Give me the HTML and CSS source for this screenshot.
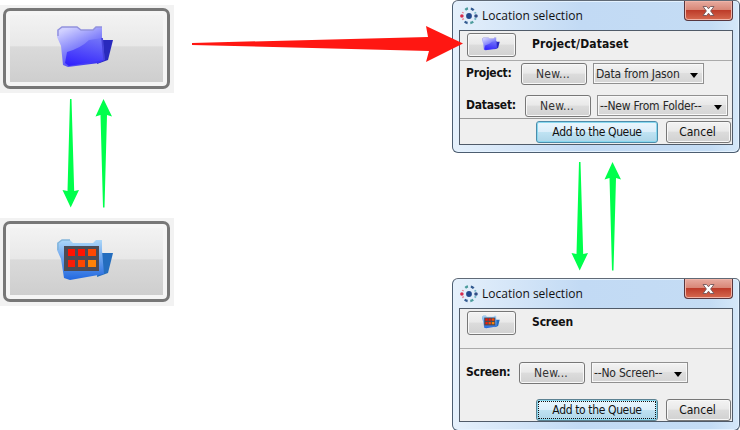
FILE: index.html
```html
<!DOCTYPE html>
<html lang="en">
<head>
<meta charset="utf-8">
<title>Location selection</title>
<link rel="stylesheet" href="styles.css">
</head>
<body>
<svg class="defs" width="0" height="0" aria-hidden="true">
  <defs>
    <linearGradient id="purple" x1="0.1" y1="0.1" x2="0.6" y2="1"><stop offset="0" stop-color="#d0d0ff"/><stop offset=".45" stop-color="#8787fb"/><stop offset="1" stop-color="#3d35f2"/></linearGradient>
    <linearGradient id="deep" x1="0.1" y1="1" x2=".8" y2="0"><stop offset="0" stop-color="#2612ff"/><stop offset="1" stop-color="#6e70f8"/></linearGradient>
    <linearGradient id="blue" x1="0" y1="0" x2="0" y2="1"><stop offset="0" stop-color="#acd7f8"/><stop offset="1" stop-color="#2167df"/></linearGradient>
    <symbol id="folder" viewBox="0 0 57 42">
      <path d="M43 14H56L51 34L40 38Z" fill="#2929bd"/>
      <path d="M0 4L5 1H20L24 4H36L39 1H45V11L48 34L42 37L11 41L6 39L4 20L0 11Z" fill="url(#purple)"/>
      <path d="M10 26Q24 22 32 14L46 12L47 34L12 40L8 37Z" fill="url(#deep)" opacity=".8"/>
      <path d="M1 10V4L5 1H20L24 4H36L39 1H45" fill="none" stroke="#9292dd" stroke-width="1.5"/>
      <path d="M45 12L47 34" fill="none" stroke="#4742d8" stroke-width="1.5"/>
    </symbol>
    <symbol id="plate" viewBox="0 0 57 42">
      <path d="M42 14H56L51 34L40 38Z" fill="#246dbe"/>
      <path d="M0 4L5 1H13L16 4H36L39 1H45V11L47 35L13 41L7 39L4 20L0 11Z" fill="url(#blue)"/>
      <path d="M1 11V4L5 1H13" fill="none" stroke="#84b5da" stroke-width="1.5"/>
      <path d="M7 7H42V32H7Z" fill="#4b4b55"/>
      <path d="M11 10H18V17H11ZM21 10H28V17H21Z" fill="#ff1200"/><path d="M31 10H39V17H31ZM21 21H28V28H21Z" fill="#ff4700"/><path d="M11 21H18V28H11Z" fill="#f91d08"/><path d="M31 21H39V28H31Z" fill="#ff8206"/>
    </symbol>
    <symbol id="logo" viewBox="0 0 18 18">
      <circle cx="9" cy="9" r="2.9" fill="#20488c"/>
      <path d="M5.3 2.8Q6.6 1.7 8 1.4M10.3 16Q12 15.7 13.2 14.7" stroke="#4c9c9c" stroke-width="2.3" fill="none"/>
      <path d="M10.8 1.7Q12.7 2 13.6 3.3M4.7 14.5Q6 15.7 7.6 16" stroke="#335b91" stroke-width="2.3" fill="none"/>
      <path d="M3.1 5.2L2.7 6.2M2.7 11.5L3.4 12.8" stroke="#e58a9a" stroke-width="2"/><circle cx="1.9" cy="9" r="1.8" fill="#d72b4d"/>
      <path d="M15 5.2L15.6 6.6M15.7 11L14.9 12.7" stroke="#79b9c9" stroke-width="2"/><circle cx="16" cy="9" r="1.8" fill="#314e87"/>
    </symbol>
    <symbol id="arrows" viewBox="0 0 50 110">
      <path d="M8 0H9.5L12.2 92L17 91L8.7 108.5L.5 91L5.5 92Z" fill="#00ff4c"/>
      <path d="M41.5 0L50 17.5L45 16L42.5 108.5H41L38.5 16L33.5 17.5Z" fill="#00ff4c"/>
    </symbol>
    <symbol id="cross" viewBox="0 0 13 12">
      <path d="M1 1.5H4.6L6.5 3.8L8.4 1.5H12L8.6 6L12 10.5H8.4L6.5 8.2L4.6 10.5H1L4.4 6Z" fill="#fff" stroke="#74575a" stroke-width=".9"/>
    </symbol>
  </defs>
</svg>
<main class="canvas">
  <section class="samples">
    <div class="sample"><div class="big-button"><svg><use href="#folder"/></svg></div></div>
    <svg class="swap"><use href="#arrows"/></svg>
    <div class="sample"><div class="big-button"><svg><use href="#plate"/></svg></div></div>
  </section>
  <section class="dialogs">
    <div class="dialog">
      <div class="titlebar"><svg class="logo"><use href="#logo"/></svg><span class="title">Location selection</span>
        <div class="close"><svg><use href="#cross"/></svg></div></div>
      <div class="content">
        <div class="head"><div class="button icon-button"><svg><use href="#folder"/></svg></div><b class="heading-project">Project/Dataset</b></div>
        <div class="row project"><b>Project:</b><div class="button new">New...</div><div class="combo jason"><span>Data from Jason</span><i></i></div></div>
        <div class="row dataset"><b>Dataset:</b><div class="button new">New...</div><div class="combo from-folder"><span>--New From Folder--</span><i></i></div></div>
        <div class="footer"><div class="button primary">Add to the Queue</div><div class="button cancel">Cancel</div></div>
      </div>
    </div>
    <svg class="swap"><use href="#arrows"/></svg>
    <div class="dialog screen-dialog">
      <div class="titlebar"><svg class="logo"><use href="#logo"/></svg><span class="title">Location selection</span>
        <div class="close"><svg><use href="#cross"/></svg></div></div>
      <div class="content">
        <div class="head"><div class="button icon-button"><svg><use href="#plate"/></svg></div><b>Screen</b></div>
        <div class="row screen"><b>Screen:</b><div class="button new">New...</div><div class="combo no-screen"><span>--No Screen--</span><i></i></div></div>
        <div class="footer"><div class="button primary focused">Add to the Queue</div><div class="button cancel">Cancel</div></div>
      </div>
    </div>
  </section>
  <svg class="red-arrow" viewBox="0 0 272 38"><path d="M0 17L236 11L234 0L271 17.5L234 36L237 25L0 19Z" fill="#ff1712"/></svg>
</main>
</body>
</html>
```
FILE: styles.css
```css
* { box-sizing: border-box; }
body { margin: 0; background: #fff; color: #111; font: 12px/14px "DejaVu Sans Condensed", "DejaVu Sans", sans-serif; font-stretch: condensed; overflow: hidden; }
.defs { position: absolute; }
svg { display: block; flex: none; }
.canvas { position: relative; width: 740px; height: 430px; display: flex; justify-content: space-between; overflow: hidden; }
.samples { width: 174px; padding-top: 5px; }
.sample { height: 88px; padding: 3px 3px 4px; background: #f2f2f2; }
.big-button { height: 81px; width: 167px; border: 3px solid #777; border-radius: 7px; display: flex; align-items: center; padding-left: 51px; background: linear-gradient(#f4f4f4, #e8e8e8 46%, #dadada 48%, #cdcdcd); box-shadow: inset 0 0 0 4px #f5f5f5; }
.big-button svg { width: 57px; height: 42px; margin-bottom: 3px; }
.swap { width: 50px; height: 110px; margin-left: 62px; }
.samples .swap { margin-top: 6px; margin-bottom: 9px; }
.dialogs { width: 288px; }
.dialog { width: 288px; height: 153px; padding: 0 7px; border: 1px solid #4c5d70; border-top-color: #606a76; border-radius: 6px 5px 6px 6px; background: linear-gradient(90deg, #e5f0fb, #c2daf4 45%, #c4dcf4 90%, #d5e8f9); box-shadow: inset 0 0 0 1px #e4f2ff; }
.dialogs .swap { margin: 9px 0 6px 119px; }
.titlebar { height: 29px; display: flex; align-items: flex-start; }
.logo { width: 18px; height: 18px; margin-top: 6px; }
.title { margin: 7px 0 0 4px; font: 12px/16px "Open Sans", "Noto Sans", sans-serif; white-space: nowrap; }
.close { width: 49px; height: 20px; margin: 0 -1px 0 auto; border: 1px solid #58363e; border-top: 0; border-radius: 0 0 4px 4px; display: flex; justify-content: center; align-items: center; background: linear-gradient(#e7aba0, #d98878 45%, #bd3c2a 50%, #d66a50); box-shadow: inset 0 0 0 1px #f0b4a8; }
.close svg { width: 13px; height: 12px; }
.content { width: 274px; height: 115px; margin-left: -1px; border: 1px solid #505b69; background: #efefef; }
.head { height: 30px; padding: 2px 0 0 7px; display: flex; border-bottom: 1px solid #aaa; }
b { letter-spacing: -.25px; white-space: nowrap; }
.head b { margin: 4px 0 0 16px; letter-spacing: -.15px; }
.head .heading-project { letter-spacing: .12px; }
.button { height: 22px; border: 1px solid #777; border-radius: 3px; background: linear-gradient(#f3f3f3, #e9e9e9 46%, #dcdcdc 50%, #d1d1d1); box-shadow: inset 0 0 0 1px #f8f8f8; display: flex; justify-content: center; align-items: center; white-space: nowrap; }
.icon-button { width: 49px; height: 24px; }
.icon-button svg { width: 18px; height: 14px; margin: 0 1px 3px 0; }
.row { display: flex; align-items: flex-start; padding-left: 6px; }
.row b { padding-top: 3px; }
.project { height: 32px; padding-top: 2px; }
.project b { width: 55px; }
.dataset { height: 25px; padding-top: 2px; }
.dataset b { width: 59px; }
.new { width: 66px; padding-right: 2px; color: #333; letter-spacing: .2px; }
.combo { height: 21px; margin-left: 6px; padding: 0 5px 0 2px; border: 1px solid #909090; display: flex; align-items: center; justify-content: space-between; background: linear-gradient(#f3f3f3, #e8e8e8 46%, #dedede 50%, #d5d5d5); box-shadow: inset 0 0 0 1px #f8f8f8; color: #282828; white-space: nowrap; letter-spacing: -.2px; }
.combo i { border: 4px solid transparent; border-top: 5px solid #000; border-bottom: 0; margin-top: 3px; }
.jason { width: 111px; }
.from-folder { width: 131px; }
.no-screen { width: 97px; }
.footer { border-top: 1px solid #999; padding: 2px 0 0 76px; display: flex; gap: 8px; }
.primary { width: 122px; border-color: #4c8cab; background: linear-gradient(#eaf6fd, #dceefa 48%, #c0e3f3 50%, #add5e8); box-shadow: inset 0 0 0 1px #89d8ef; letter-spacing: -.37px; }
.cancel { width: 65px; padding-right: 2px; }
.screen-dialog .head { height: 40px; }
.screen { height: 48px; padding-top: 13px; }
.screen b { width: 53px; }
.screen-dialog .footer { border: 0; }
.screen-dialog .content { height: 114px; }
.focused { border-color: #5d8292; outline: 1px dotted #111; outline-offset: -3px; }
.red-arrow { position: absolute; left: 192px; top: 26px; width: 272px; height: 38px; }
```
